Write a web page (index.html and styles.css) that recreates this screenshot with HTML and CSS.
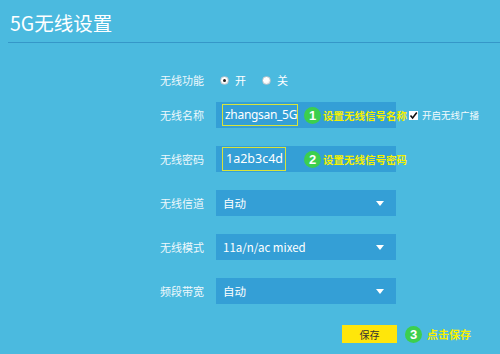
FILE: index.html
```html
<!DOCTYPE html>
<html lang="zh">
<head>
<meta charset="utf-8">
<link rel="stylesheet" href="styles.css">
</head>
<body>
<div class="page">
  <div class="header"><h1 class="title">5G无线设置</h1></div>
  <div class="form">
    <div class="row row-radio">
      <div class="label">无线功能</div>
      <div class="radios">
        <span class="radio on"></span><span class="rtext">开</span>
        <span class="radio"></span><span class="rtext">关</span>
      </div>
    </div>
    <div class="row">
      <div class="label">无线名称</div>
      <div class="field">
        <div class="inwrap"><div class="input w1">zhangsan_5G</div></div>
        <span class="badge">1</span><span class="note">设置无线信号名称</span>
      </div>
      <span class="check"><svg width="9" height="9" viewBox="0 0 9 9"><path d="M1.5 4.5 L3.6 7 L7.8 1.6" fill="none" stroke="#111" stroke-width="1.6"/></svg></span>
      <span class="ctext">开启无线广播</span>
    </div>
    <div class="row">
      <div class="label">无线密码</div>
      <div class="field">
        <div class="inwrap"><div class="input w2">1a2b3c4d</div></div>
        <span class="badge">2</span><span class="note">设置无线信号密码</span>
      </div>
    </div>
    <div class="row">
      <div class="label">无线信道</div>
      <div class="field select"><span class="val">自动</span><span class="arrow"></span></div>
    </div>
    <div class="row">
      <div class="label">无线模式</div>
      <div class="field select"><span class="val">11a/n/ac mixed</span><span class="arrow"></span></div>
    </div>
    <div class="row">
      <div class="label">频段带宽</div>
      <div class="field select"><span class="val">自动</span><span class="arrow"></span></div>
    </div>
    <div class="row row-save">
      <div class="save">保存</div>
      <span class="badge b3">3</span><span class="note n3">点击保存</span>
    </div>
  </div>
</div>
</body>
</html>
```
FILE: styles.css
```css
html, body { margin: 0; padding: 0; }
body {
  background: #4bbadf;
  font-family: "Noto Sans CJK SC", "Noto Sans", sans-serif;
  color: #fff;
  width: 500px;
  height: 354px;
  overflow: hidden;
}
.header {
  margin-left: 8px;
  height: 42px;
  border-bottom: 1px solid #3597c8;
}
.title {
  margin: 0;
  padding: 11px 0 0 2px;
  font-size: 19.5px;
  font-weight: normal;
  line-height: 24px;
  color: #fff;
}
.form {
  padding: 24px 0 0 160px;
  display: flex;
  flex-direction: column;
}
.row {
  display: flex;
  align-items: center;
  height: 26px;
  margin-bottom: 18px;
}
.row-radio { margin-bottom: 9px; }
.label {
  width: 56px;
  flex: none;
  font-size: 11px;
  color: #eef8fc;
  line-height: 26px;
}
.radios { display: flex; align-items: center; padding-left: 4px; }
.radio {
  width: 9px; height: 9px; border-radius: 50%;
  background: radial-gradient(circle at 40% 35%, #ffffff 40%, #dcdcdc 100%);
  box-sizing: border-box;
  border: 1px solid #b8c4cc;
  position: relative;
  flex: none;
}
.radio.on::after {
  content: ""; position: absolute; left: 2px; top: 2px;
  width: 3px; height: 3px; border-radius: 50%; background: #222;
}
.rtext { font-size: 11px; margin: 0 16px 0 6px; }
.field {
  width: 180px;
  height: 26px;
  flex: none;
  background: #349fd6;
  display: flex;
  align-items: center;
  padding-left: 6px;
  box-sizing: border-box;
  white-space: nowrap;
}
.inwrap { width: 82px; flex: none; display: flex; }
.input {
  height: 22px;
  flex: none;
  box-sizing: border-box;
  border: 1px solid #d8e43a;
  font-family: "Noto Sans", sans-serif;
  font-size: 12.5px;
  line-height: 20px;
  padding-left: 3px;
  color: #fff;
  white-space: nowrap;
}
.w1 { width: 76px; font-size: 12px; padding-left: 2px; letter-spacing: -0.3px; }
.w2 { width: 64px; height: 24px; line-height: 22px; }
.badge {
  width: 17px; height: 17px; border-radius: 50%;
  background: #3ccf4e;
  color: #fff;
  font-size: 13px; font-weight: bold;
  display: inline-flex; align-items: center; justify-content: center;
  flex: none;
  font-family: "Liberation Sans", sans-serif;
}
.note {
  color: #f5f000;
  font-size: 10.5px;
  font-weight: bold;
  margin-left: 2px;
  white-space: nowrap;
  flex: none;
}
.check {
  width: 9px; height: 9px; background: #fff;
  margin-left: 13px;
  display: inline-flex;
  flex: none;
}
.ctext { font-size: 9.5px; margin-left: 4px; color: #f4fafd; white-space: nowrap; }
.select { padding-left: 7px; justify-content: space-between; padding-right: 12px; }
.val { font-size: 11.5px; color: #fff; }
.arrow {
  width: 0; height: 0;
  border-left: 4px solid transparent;
  border-right: 4px solid transparent;
  border-top: 5px solid #fff;
}
.row-save { margin-top: 3px; padding-left: 182px; height: 18px; }
.save {
  width: 55px; height: 18px;
  flex: none;
  background: #ffe60a;
  color: #333;
  font-size: 10px;
  display: flex; align-items: center; justify-content: center;
}
.b3 { margin-left: 8px; }
.n3 { font-size: 11px; margin-left: 5px; }
```
